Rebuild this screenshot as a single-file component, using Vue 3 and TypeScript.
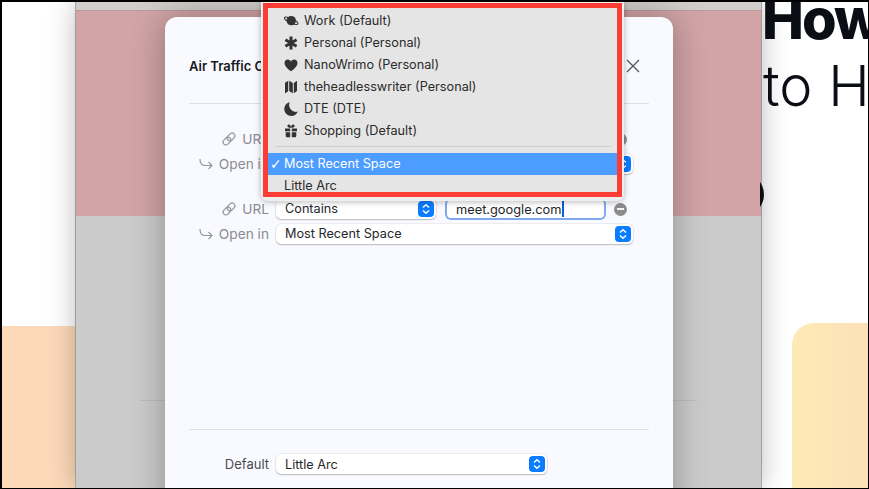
<script setup lang="ts">
interface SpaceItem { name: string; icon: string }
const spaces: SpaceItem[] = [
  { name: 'Work (Default)', icon: 'saturn' },
  { name: 'Personal (Personal)', icon: 'asterisk' },
  { name: 'NanoWrimo (Personal)', icon: 'heart' },
  { name: 'theheadlesswriter (Personal)', icon: 'map' },
  { name: 'DTE (DTE)', icon: 'moon' },
  { name: 'Shopping (Default)', icon: 'gift' },
]
</script>

<template>
  <div class="stage">
    <aside class="side side-left"><div class="peach"></div></aside>

    <main class="window">
      <div class="chrome"></div>
      <div class="pink"></div>
      <div class="grey"></div>
      <div class="hairline"></div>
      <div class="dark-arc"></div>

      <section class="modal">
        <header class="modal-head">
          <h1>Air Traffic Control</h1>
          <svg class="close" viewBox="0 0 14 14" width="14" height="14"><path d="M1 1l12 12M13 1L1 13" /></svg>
        </header>

        <div class="rules">
          <div class="group">
            <div class="row">
              <label class="label">
                <svg class="mini" viewBox="0 0 16 16" width="16" height="16"><g transform="rotate(-45 8 8)"><rect x="0.8" y="5.2" width="8.6" height="5.6" rx="2.8" /><rect x="6.6" y="5.2" width="8.6" height="5.6" rx="2.8" /></g></svg>
                URL
              </label>
              <div class="select short"><span>Contains</span><i class="stepper"><svg viewBox="0 0 16 16"><path d="M5 6.5L8 3.8l3 2.7M5 9.5l3 2.7 3-2.7" /></svg></i></div>
              <div class="input"><span>meet.google.com</span></div>
              <span class="minus"></span>
            </div>
            <div class="row">
              <label class="label">
                <svg class="mini" viewBox="0 0 16 16" width="16" height="16"><path d="M2 3c0 4.500 2 6.500 5 6.500h7M10.500 6l3.500 3.500-3.500 3.500" /></svg>
                Open in
              </label>
              <div class="select wide"><span>Most Recent Space</span><i class="stepper"><svg viewBox="0 0 16 16"><path d="M5 6.500L8 3.800l3 2.700M5 9.500l3 2.700 3-2.700" /></svg></i></div>
            </div>
          </div>

          <div class="group">
            <div class="row">
              <label class="label">
                <svg class="mini" viewBox="0 0 16 16" width="16" height="16"><g transform="rotate(-45 8 8)"><rect x="0.8" y="5.2" width="8.600" height="5.600" rx="2.800" /><rect x="6.600" y="5.200" width="8.600" height="5.600" rx="2.800" /></g></svg>
                URL
              </label>
              <div class="select short"><span>Contains</span><i class="stepper"><svg viewBox="0 0 16 16"><path d="M5 6.500L8 3.800l3 2.700M5 9.500l3 2.700 3-2.700" /></svg></i></div>
              <div class="input focus"><span>meet.google.com</span><b class="caret"></b></div>
              <span class="minus"></span>
            </div>
            <div class="row">
              <label class="label">
                <svg class="mini" viewBox="0 0 16 16" width="16" height="16"><path d="M2 3c0 4.500 2 6.500 5 6.500h7M10.500 6l3.500 3.500-3.500 3.500" /></svg>
                Open in
              </label>
              <div class="select wide"><span>Most Recent Space</span><i class="stepper"><svg viewBox="0 0 16 16"><path d="M5 6.500L8 3.800l3 2.700M5 9.500l3 2.700 3-2.700" /></svg></i></div>
            </div>
          </div>
        </div>

        <footer class="modal-foot">
          <div class="row">
            <label class="label dark">Default</label>
            <div class="select def"><span>Little Arc</span><i class="stepper"><svg viewBox="0 0 16 16"><path d="M5 6.500L8 3.800l3 2.700M5 9.500l3 2.700 3-2.700" /></svg></i></div>
          </div>
        </footer>
      </section>

      <div class="menu">
        <div class="menu-inner">
          <div v-for="s in spaces" :key="s.name" class="item">
            <svg class="icon" viewBox="0 0 16 16" width="16" height="16">
              <g v-if="s.icon === 'saturn'">
                <circle cx="8.200" cy="7.600" r="4.700" />
                <ellipse cx="8.200" cy="7.800" rx="7.300" ry="2" transform="rotate(24 8.200 7.800)" fill="none" stroke="#333" stroke-width="1.100" />
              </g>
              <g v-else-if="s.icon === 'asterisk'" stroke="#333" stroke-width="3">
                <path d="M8 1.500v13M2.400 4.800l11.200 6.400M13.600 4.800L2.400 11.200" />
              </g>
              <path v-else-if="s.icon === 'heart'" d="M8 14.200C3.800 11.200 1.500 8.800 1.500 5.900 1.500 3.800 3 2.400 4.800 2.400 6.200 2.400 7.400 3.200 8 4.400 8.600 3.200 9.800 2.400 11.200 2.400 13 2.400 14.500 3.800 14.500 5.900 14.500 8.800 12.200 11.200 8 14.200z" />
              <path v-else-if="s.icon === 'map'" d="M2 3.800l3.200-2v10.400L2 14.400zM6.200 1.800l3.600 2.100v10.300l-3.600-2.100zM10.800 3.900l3.200-2.100v10.300l-3.200 2.100z" />
              <path v-else-if="s.icon === 'moon'" d="M6.800 1.200A7 7 0 1 0 14.800 10.600 6.800 6.800 0 0 1 6.800 1.200z" />
              <path v-else d="M2 5.400h5.200v2.800H2zM8.800 5.400H14v2.800H8.800zM2.700 9.300h4.500v5H4a1.300 1.300 0 0 1-1.300-1.300zM8.800 9.300h4.500V13a1.300 1.300 0 0 1-1.300 1.300H8.800zM8 4.800C6.800 4.800 4.400 4.500 4.400 3 4.400 1.900 5.300 1.400 6 1.500 7.200 1.700 7.800 3 8 3.800 8.200 3 8.800 1.700 10 1.500 10.700 1.400 11.600 1.900 11.600 3 11.600 4.500 9.200 4.800 8 4.800z" />
            </svg>
            <span>{{ s.name }}</span>
          </div>
          <div class="sep"></div>
          <div class="item plain active"><em class="check">✓</em><span>Most Recent Space</span></div>
          <div class="item plain"><span>Little Arc</span></div>
        </div>
      </div>
    </main>

    <aside class="side side-right">
      <div class="headline"><strong>How</strong><span>to H</span></div>
      <div class="yellow"></div>
    </aside>
  </div>
</template>

<style>
html, body { margin: 0; background: #000; overflow: hidden; }
</style>

<style scoped>
.stage {
  width: 866px;
  height: 486px;
  margin: 2px 1px 1px 2px;
  display: flex;
  overflow: hidden;
  background: #fff;
  font-family: Inter, "Liberation Sans", sans-serif;
}
.side { position: relative; background: #fff; overflow: hidden; }
.side-left { width: 74px; flex: none; }
.side-right { flex: 1; min-width: 0; }
.peach { position: absolute; left: 0; right: 0; top: 324px; bottom: 0; background: #fdd9b9; }
.yellow {
  position: absolute; left: 31px; right: 0; top: 321px; bottom: 0;
  border-radius: 22px 0 0 0;
  background: linear-gradient(90deg, #fdeab5, #fde0b9);
}
.headline { position: relative; z-index: 1; padding-left: 2px; margin-top: -17px; color: #0b0e14; font-size: 56px; line-height: 68px; }
.headline strong, .headline span { display: block; white-space: nowrap; }
.headline strong { font-weight: 800; margin-left: -1px; letter-spacing: -2px; }
.headline span { font-weight: 300; margin-top: -1px; }

.window {
  position: relative; z-index: 2; width: 685px; flex: none;
  display: flex; flex-direction: column;
  box-shadow: 0 0 26px rgba(0, 0, 0, .28), 0 0 0 1px #b6b6b6;
}
.chrome { height: 9px; background: #d0cdcb; border-bottom: 1px solid #b69a9b; box-sizing: border-box; }
.pink { height: 205px; background: #d2a4a6; }
.grey { flex: 1; background: #cbcbcb; }
.hairline { position: absolute; left: 64px; width: 557px; top: 398px; height: 1px; background: #bdbdbd; }
.dark-arc {
  position: absolute; left: 645px; top: 171px; width: 43px; height: 43px;
  border-radius: 50%; background: #0b0e14;
  clip-path: inset(0 0 0 39px);
  z-index: 1;
}

.modal {
  position: absolute; left: 89px; top: 15px; width: 508px; height: 520px;
  z-index: 2;
  box-sizing: border-box; padding: 0 24px;
  background: #f9faff; border-radius: 12px 12px 0 0;
  box-shadow: 0 0 34px rgba(0, 0, 0, .3);
  display: flex; flex-direction: column;
}
.modal-head {
  height: 87px; flex: none; box-sizing: border-box;
  border-bottom: 1px solid #e0e1e6;
  display: flex; align-items: center; justify-content: space-between;
  padding: 12px 9px 0 0;
}
.modal-head h1 { margin: 0; font-size: 13px; font-weight: 600; color: #17181c; }
.close { fill: none; stroke: #55565f; stroke-width: 1.300; }

.rules { padding-top: 25px; height: 326px; box-sizing: border-box; flex: none; border-bottom: 1px solid #e0e1e6; }
.group { display: flex; flex-direction: column; gap: 5px; margin-bottom: 25px; }
.row { display: flex; align-items: center; height: 20px; }
.label {
  width: 80px; flex: none; box-sizing: border-box; margin-right: 7px;
  display: flex; align-items: center; justify-content: flex-end; gap: 5px;
  font-size: 13.700px; color: #8a8b8f; white-space: nowrap;
}
.label.dark { color: #4a4b50; font-size: 13px; }
.mini { fill: none; stroke: #97989c; stroke-width: 1.200; }

.select {
  position: relative; box-sizing: border-box; height: 20px; flex: none;
  display: flex; align-items: center; padding-left: 9px;
  background: #fff; border-radius: 5px;
  box-shadow: 0 0 0 .5px rgba(0, 0, 0, .1), 0 1px 1.500px rgba(0, 0, 0, .22);
  font-size: 12.700px; color: #26272b;
}
.short { width: 160px; padding-bottom: 1px; }
.wide { width: 357px; padding-bottom: 1px; }
.def { width: 271px; }
.stepper {
  position: absolute; right: 2px; top: 2px; width: 16px; height: 16px;
  border-radius: 4px; background: #0a7cff; display: block;
}
.stepper svg { display: block; width: 16px; height: 16px; fill: none; stroke: #fff; stroke-width: 1.500; }
.input {
  position: relative; box-sizing: border-box; width: 157px; height: 18px; margin-left: 11px; flex: none;
  display: flex; align-items: center; padding-left: 9px;
  background: #fff; border-radius: 4px;
  box-shadow: 0 0 0 .5px rgba(0, 0, 0, .1);
  font-size: 12.800px; color: #26272b;
}
.input.focus { box-shadow: 0 0 0 2px #7fa8ee; }
.caret { display: inline-block; width: 2px; height: 16px; background: #0a5fe0; }
.minus {
  position: relative; width: 13px; height: 13px; margin-left: 10px; flex: none;
  border-radius: 50%; background: #8c8c8c;
}
.minus::after { content: ""; position: absolute; left: 3px; right: 3px; top: 5.500px; height: 2px; background: #f2f2f2; }
.modal-foot { padding-top: 24px; }

.menu {
  position: absolute; z-index: 3; left: 185px; top: 0; width: 363px; height: 199px;
  box-sizing: border-box; padding: 1px 2px;
  background: #efefef; border-radius: 0 0 7px 7px;
  box-shadow: 0 1px 6px rgba(0, 0, 0, .28);
}
.menu-inner {
  box-sizing: border-box; height: 194px; padding-top: 1.500px;
  border: 5px solid #fb3d35; background: #e5e5e5; overflow: hidden;
}
.item {
  height: 22px; display: flex; align-items: center; gap: 5px;
  padding-left: 15px; font-size: 12.700px; color: #2b2b2b; white-space: nowrap;
}
.icon { fill: #333; flex: none; }
.item.plain { padding-left: 16px; position: relative; }
.item.active { background: #4c9dff; color: #fff; }
.check { position: absolute; left: 2px; top: 3px; font-style: normal; font-weight: 700; font-size: 14px; line-height: 16px; font-family: "DejaVu Sans", sans-serif; }
.sep { height: 1px; margin: 4.500px 6px 5.500px 7px; background: #cfcfcf; }
</style>
